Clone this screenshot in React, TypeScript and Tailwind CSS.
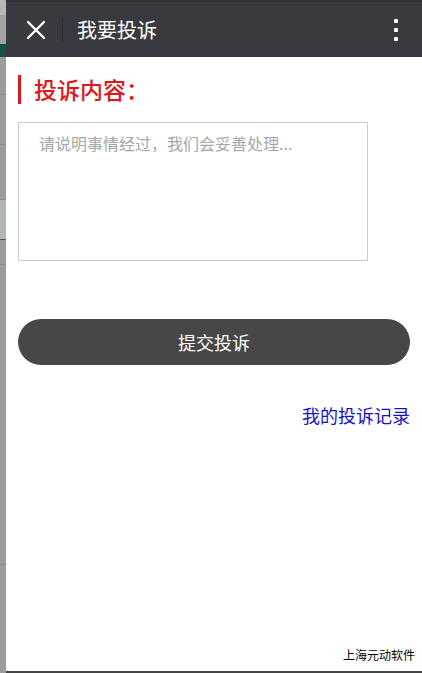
import React from "react";

export default function App() {
  const font = { fontFamily: '"Noto Sans CJK SC", "Liberation Sans", sans-serif' };
  return (
    <div className="flex w-[422px] h-[673px] overflow-hidden bg-white" style={font}>
      {/* underlying page strip */}
      <div className="w-[6px] shrink-0 flex flex-col bg-[#9c9c9c]">
        <div className="h-[15px] bg-[#b5b5b5]" />
        <div className="h-[29px] bg-[#a3a3a3]" />
        <div className="h-[13px] bg-[#0f5048]" />
        <div className="h-[38px] border-b border-[#8a8a8a]" />
        <div className="h-[50px] border-b border-[#8a8a8a]" />
        <div className="h-[55px] border-b border-[#8a8a8a]" />
        <div className="h-[40px] bg-[#b0b6b8] border-b border-[#555]" />
        <div className="h-[25px] border-b border-[#8a8a8a]" />
        <div className="h-[60px]" />
        <div className="h-[240px] border-b border-[#8a8a8a]" />
        <div className="flex-1" />
      </div>

      {/* main panel */}
      <div className="flex-1 min-w-0 flex flex-col border-b-2 border-[#444]">
        <div className="h-[57px] shrink-0 bg-[#393a3f] border-t-2 border-[#2f3034] flex items-center">
          <div className="w-[56px] flex items-center justify-center pl-[4px]">
            <svg width="20" height="20" viewBox="0 0 20 20">
              <path d="M2 2 L18 18 M18 2 L2 18" stroke="white" strokeWidth="2.4" strokeLinecap="round" />
            </svg>
          </div>
          <div className="w-px h-[24px] bg-[#2c2d31]" />
          <div className="ml-[14px] text-white text-[20px] leading-none">我要投诉</div>
          <div className="flex-1" />
          <div className="mr-[24px] flex flex-col gap-[5px]">
            <div className="w-[4px] h-[4px] bg-white rounded-[1px]" />
            <div className="w-[4px] h-[4px] bg-white rounded-[1px]" />
            <div className="w-[4px] h-[4px] bg-white rounded-[1px]" />
          </div>
        </div>

        <div className="flex-1 flex flex-col px-[12px]">
          <div className="mt-[18px] flex items-center h-[29px]">
            <div className="w-[3px] h-[29px] bg-[#e0161c]" />
            <div className="ml-[13px] text-[23px] text-[#e0161c] leading-none font-medium">投诉内容：</div>
          </div>

          <textarea
            className="mt-[18px] w-[350px] h-[139px] border border-[#cccccc] px-[20px] py-[8px] text-[16px] leading-[24px] resize-none outline-none placeholder:text-[#a6a6a6]"
            placeholder="请说明事情经过，我们会妥善处理..."
            style={font}
          />

          <button className="mt-[58px] h-[46px] w-full rounded-full bg-[#474747] text-white text-[18px]" style={font}>
            提交投诉
          </button>

          <div className="mt-[38px] text-right text-[18px] leading-[24px] text-[#1212c8]">
            我的投诉记录
          </div>

          <div className="flex-1" />
          <div className="mb-[8px] mr-[-5px] text-right text-[12px] leading-[16px] text-black">
            上海元动软件
          </div>
        </div>
      </div>
    </div>
  );
}
